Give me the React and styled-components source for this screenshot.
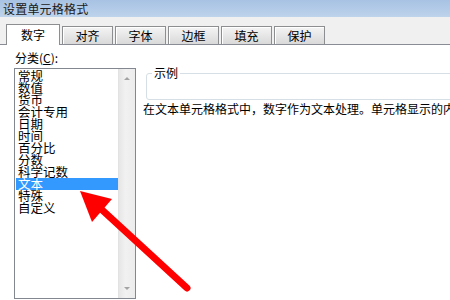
import React from "react";
import styled, { createGlobalStyle } from "styled-components";

const GlobalStyle = createGlobalStyle`
  html, body {
    margin: 0;
    padding: 0;
    background: #ffffff;
  }
  body {
    font-family: "Noto Sans CJK SC", "Liberation Sans", sans-serif;
    font-size: 12px;
    color: #000;
  }
`;

const categories = [
  "常规",
  "数值",
  "货币",
  "会计专用",
  "日期",
  "时间",
  "百分比",
  "分数",
  "科学记数",
  "文本",
  "特殊",
  "自定义",
];

const tabs = ["数字", "对齐", "字体", "边框", "填充", "保护"];

const Window = styled.div`
  position: relative;
  width: 450px;
  height: 300px;
  overflow: hidden;
  background: #ffffff;
`;

const TitleBar = styled.div`
  height: 17px;
  padding-left: 3px;
  background: linear-gradient(#a7c2e3, #bed3ec);
  color: #1a1a1a;
  font-size: 12px;
  line-height: 17px;
  letter-spacing: 0.2px;
`;

const TabStrip = styled.div`
  display: flex;
  align-items: flex-end;
  gap: 2px;
  height: 27px;
  padding-left: 6px;
  background: #f0f0f0;
`;

const Tab = styled.div`
  position: relative;
  box-sizing: border-box;
  display: flex;
  align-items: center;
  justify-content: center;
  width: ${(p) => (p.$active ? "54px" : "51px")};
  height: ${(p) => (p.$active ? "21px" : "18px")};
  margin-bottom: ${(p) => (p.$active ? "-1px" : "0")};
  z-index: ${(p) => (p.$active ? 2 : 1)};
  border: 1px solid #8d8e8f;
  border-bottom: none;
  background: ${(p) =>
    p.$active ? "#ffffff" : "linear-gradient(#f4f4f4, #d9d9d9)"};
  box-shadow: ${(p) => (p.$active ? "none" : "inset 1px 1px 0 #ffffff")};
  font-size: 12px;
  line-height: 12px;
  padding-top: ${(p) => (p.$active ? "0" : "1px")};
`;

const Panel = styled.div`
  display: flex;
  gap: 7px;
  height: 255px;
  padding: 6px 0 0 14px;
  border-top: 1px solid #898c95;
  background: #ffffff;
`;

const LeftCol = styled.div`
  display: flex;
  flex-direction: column;
  gap: 3px;
  flex: none;
`;

const FieldLabel = styled.div`
  font-size: 12px;
  line-height: 14px;
  padding-left: 1px;
  u {
    text-decoration: underline;
    text-underline-offset: 1px;
  }
`;

const ListBox = styled.div`
  display: flex;
  box-sizing: border-box;
  width: 122px;
  height: 231px;
  border: 1px solid #828790;
  background: #ffffff;
`;

const Items = styled.ul`
  list-style: none;
  margin: 0;
  padding: 1px 0 0 1px;
  flex: 1;
`;

const Item = styled.li`
  height: 12px;
  padding-left: 2px;
  font-size: 12.5px;
  line-height: 12px;
  white-space: nowrap;
  background: ${(p) => (p.$selected ? "#3399ff" : "transparent")};
  color: ${(p) => (p.$selected ? "#ffffff" : "#000000")};
`;

const ScrollBar = styled.div`
  display: flex;
  flex-direction: column;
  justify-content: space-between;
  align-items: center;
  width: 17px;
  padding: 8px 0 8px;
  box-sizing: border-box;
  background: linear-gradient(90deg, #e6e6e6, #f1f1f1 40%, #ececec);
  border-left: 1px solid #e2e2e2;
`;

const Arrow = styled.span`
  width: 0;
  height: 0;
  border-left: 3px solid transparent;
  border-right: 3px solid transparent;
  ${(p) =>
    p.$up
      ? "border-bottom: 3px solid #a3a3a3;"
      : "border-top: 3px solid #a3a3a3;"}
`;

const RightCol = styled.div`
  display: flex;
  flex-direction: column;
  padding-top: 16px;
  min-width: 0;
  flex: 1;
`;

const GroupBox = styled.fieldset`
  box-sizing: border-box;
  width: 330px;
  height: 33px;
  margin: 0 0 0 3px;
  padding: 0 4px;
  border: 1px solid #d5dfe5;
  border-radius: 3px;
  legend {
    padding: 0 2px;
    margin-left: 1px;
    font-size: 12px;
    line-height: 12px;
  }
`;

const Description = styled.div`
  margin-top: 2px;
  font-size: 12px;
  line-height: 14px;
  white-space: nowrap;
  overflow: hidden;
`;

const Overlay = styled.svg`
  position: absolute;
  left: 0;
  top: 0;
  pointer-events: none;
`;

export default function App() {
  return (
    <>
      <GlobalStyle />
      <Window>
        <TitleBar>设置单元格格式</TitleBar>
        <TabStrip>
          {tabs.map((t, i) => (
            <Tab key={t} $active={i === 0}>
              {t}
            </Tab>
          ))}
        </TabStrip>
        <Panel>
          <LeftCol>
            <FieldLabel>
              分类(<u>C</u>):
            </FieldLabel>
            <ListBox>
              <Items>
                {categories.map((c) => (
                  <Item key={c} $selected={c === "文本"}>
                    {c}
                  </Item>
                ))}
              </Items>
              <ScrollBar>
                <Arrow $up />
                <Arrow />
              </ScrollBar>
            </ListBox>
          </LeftCol>
          <RightCol>
            <GroupBox>
              <legend>示例</legend>
            </GroupBox>
            <Description>
              在文本单元格格式中，数字作为文本处理。单元格显示的内容与输入的内容完全一致。
            </Description>
          </RightCol>
        </Panel>
        <Overlay width="450" height="300" viewBox="0 0 450 300">
          <line
            x1="187"
            y1="288"
            x2="100"
            y2="208"
            stroke="#ff0000"
            strokeWidth="7"
            strokeLinecap="round"
          />
          <polygon points="80,191 112,199 92,222" fill="#ff0000" />
        </Overlay>
      </Window>
    </>
  );
}
